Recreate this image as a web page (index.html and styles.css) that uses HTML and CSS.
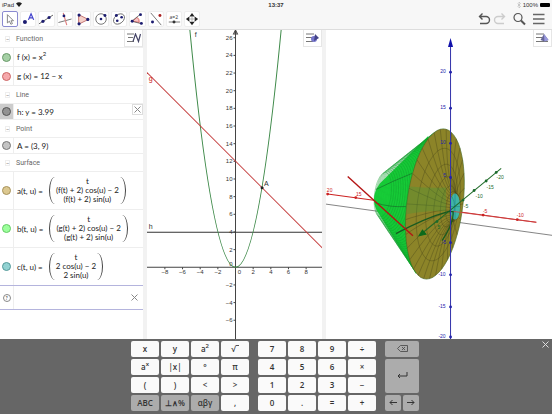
FILE: index.html
```
<!DOCTYPE html>
<html lang="en">
<head>
    <meta charset="UTF-8">
    <meta name="viewport" content="width=device-width, initial-scale=1.0">
    <title>Graphing Calculator</title>
    <link rel="stylesheet" href="styles.css">
</head>
<body>
    <header class="header">
        <div class="status-bar">
            <div class="status-left">
                <span>iPad</span>
                <svg width="6" height="5" viewBox="0 0 12 10"><path d="M0 3Q6-2 12 3L6 10Z" fill="#222"/></svg>
            </div>
            <strong class="clock">13:37</strong>
            <div class="status-right">
                <svg width="4" height="6" viewBox="0 0 8 12" fill="none" stroke="#aaa"><path d="M1 3l6 6-3 3V0l3 3-6 6"/></svg>
                <span>100%</span>
                <span class="battery"></span>
            </div>
        </div>
        <div class="toolbar">
            <div class="tools">
                <button class="tool selected" aria-label="Move"><svg viewBox="0 0 16 16"><path d="M5 3v9.500l2.300-2 1.700 3.500 1.800-.8-1.700-3.200h2.900z" fill="#fff" stroke="#777"/></svg></button>
                <button class="tool" aria-label="Point"><svg viewBox="0 0 16 16"><circle cx="4.500" cy="11.500" r="2.300" fill="#1c1c70"/><path d="M8.500 9l3-7 3 7M9.500 6.800h4" fill="none" stroke="#44c" stroke-width="1.400"/></svg></button>
                <button class="tool" aria-label="Line"><svg viewBox="0 0 16 16"><path d="M0 13.500L16 3.500" stroke="#555"/><circle cx="4.500" cy="10.700" r="1.800" fill="#1c1c70"/><circle cx="11.500" cy="6.300" r="1.800" fill="#1c1c70"/></svg></button>
                <button class="tool" aria-label="Perpendicular line"><svg viewBox="0 0 16 16"><path d="M.5 12l15-4" stroke="#666"/><path d="M6 1l4 14" stroke="#e08080" stroke-width="1.300"/><circle cx="6.800" cy="4.500" r="1.600" fill="#1c1c70"/></svg></button>
                <button class="tool" aria-label="Polygon"><svg viewBox="0 0 16 16"><path d="M3 3l11 5.500L3 14z" fill="#f5d0c8" stroke="#b66"/><circle cx="3.500" cy="3.500" r="1.800" fill="#1c1c70"/><circle cx="13.500" cy="8.500" r="1.800" fill="#1c1c70"/><circle cx="3.500" cy="13.500" r="1.800" fill="#1c1c70"/></svg></button>
                <button class="tool" aria-label="Circle"><svg viewBox="0 0 16 16"><circle cx="8" cy="8" r="6" fill="none" stroke="#666"/><circle cx="8" cy="8" r="1.500" fill="#1c1c70"/><circle cx="12.500" cy="4" r="1.700" fill="#1c1c70"/></svg></button>
                <button class="tool" aria-label="Ellipse"><svg viewBox="0 0 16 16"><ellipse cx="8" cy="8" rx="7" ry="5" transform="rotate(-40 8 8)" fill="none" stroke="#666"/><circle cx="5" cy="4" r="1.700" fill="#1c1c70"/><circle cx="6" cy="10" r="1.500" fill="#1c1c70"/><circle cx="11" cy="6" r="1.500" fill="#1c1c70"/></svg></button>
                <button class="tool" aria-label="Angle"><svg viewBox="0 0 16 16"><path d="M3 10.500L8 6q3 2 2.500 6z" fill="#f7c5c5" stroke="#d55"/><path d="M12 2.500L2 10.500l11.500 3" fill="none" stroke="#666"/><circle cx="12" cy="3" r="1.700" fill="#1c1c70"/><circle cx="2.500" cy="10.500" r="1.700" fill="#1c1c70"/><circle cx="13" cy="13" r="1.700" fill="#1c1c70"/></svg></button>
                <button class="tool" aria-label="Reflect"><svg viewBox="0 0 16 16"><path d="M2 1l12 14" stroke="#666"/><circle cx="4" cy="11.500" r="1.700" fill="#1c1c70"/><circle cx="12.500" cy="4" r="1.700" fill="#a22"/></svg></button>
                <button class="tool" aria-label="Slider"><span class="slider-label">a=2</span><svg class="slider-icon" viewBox="0 0 16 4"><path d="M2 2h13" stroke="#666"/><circle cx="8" cy="2" r="1.700" fill="#333"/></svg></button>
                <button class="tool" aria-label="Move view"><svg viewBox="0 0 16 16"><path d="M8 1l3 4H5zM8 15l3-4H5zM1 8l4-3v6zM15 8l-4-3v6z" fill="#222"/><path d="M8 5v6M5 8h6" stroke="#aaa"/></svg></button>
            </div>
            <div class="actions">
                <button aria-label="Undo"><svg width="13" height="14" viewBox="0 0 13 14"><path d="M4.500 1.500L1.500 4.500l3 3M1.500 4.500H8a3.500 3.500 0 0 1 0 7H2" fill="none" stroke="#555" stroke-width="1.400"/></svg></button>
                <button aria-label="Redo"><svg width="13" height="14" viewBox="0 0 13 14"><path d="M8.500 1.500l3 3-3 3M11.500 4.500H5a3.500 3.500 0 0 0 0 7h6" fill="none" stroke="#ccc" stroke-width="1.400"/></svg></button>
                <button class="search" aria-label="Search"><svg width="13" height="14" viewBox="0 0 13 14"><circle cx="5" cy="5.500" r="4" fill="none" stroke="#555" stroke-width="1.200"/><path d="M8 8.500l4 4" stroke="#555" stroke-width="2"/></svg></button>
                <button class="menu" aria-label="Menu"><svg width="12" height="12" viewBox="0 0 12 12"><path d="M0 1.500h11.500M0 6h11.500M0 10.500h11.500" stroke="#666" stroke-width="1.300"/></svg></button>
            </div>
        </div>
    </header>

    <main class="views">
        <section class="algebra">
            <button class="style-button" aria-label="Style"><svg width="14" height="10" viewBox="0 0 14 10"><path d="M0 1h7M1 4.500h5M0 8.500h7" stroke="#777"/><path d="M6 8.500L8.500 1l3 7.500L13.500 1" fill="none" stroke="#446" stroke-width="1.200"/></svg></button>
            <h2 class="group"><span class="collapse">–</span>Function</h2>
            <div class="row tall">
                <span class="marker"><i class="dot green"></i></span>
                <span class="formula">f (x) = x<sup>2</sup></span>
            </div>
            <div class="row tall">
                <span class="marker"><i class="dot red"></i></span>
                <span class="formula">g (x) = 12 − x</span>
            </div>
            <h2 class="group"><span class="collapse">–</span>Line</h2>
            <div class="row chosen">
                <span class="marker"><i class="dot dark"></i></span>
                <span class="formula">h: y = 3.99</span>
                <button class="remove boxed" aria-label="Delete h"><svg width="7" height="7" viewBox="0 0 7 7"><path d="M.5.5l6 6M6.500.5l-6 6" stroke="#888"/></svg></button>
            </div>
            <h2 class="group"><span class="collapse">–</span>Point</h2>
            <div class="row">
                <span class="marker"><i class="dot gray"></i></span>
                <span class="formula">A = (3, 9)</span>
            </div>
            <h2 class="group"><span class="collapse">–</span>Surface</h2>
            <div class="row surface">
                <span class="marker"><i class="dot tan"></i></span>
                <span class="formula">a(t, u) =</span>
                <span class="vector"><span>t</span><span>(f(t) + 2) cos(u) − 2</span><span>(f(t) + 2) sin(u)</span></span>
            </div>
            <div class="row surface">
                <span class="marker"><i class="dot lime"></i></span>
                <span class="formula">b(t, u) =</span>
                <span class="vector"><span>t</span><span>(g(t) + 2) cos(u) − 2</span><span>(g(t) + 2) sin(u)</span></span>
            </div>
            <div class="row surface">
                <span class="marker"><i class="dot teal"></i></span>
                <span class="formula">c(t, u) =</span>
                <span class="vector"><span>t</span><span>2 cos(u) − 2</span><span>2 sin(u)</span></span>
            </div>
            <div class="row entry">
                <span class="marker"><i class="help">?</i></span>
                <input type="text" aria-label="Input">
                <button class="remove" aria-label="Clear input"><svg width="7" height="7" viewBox="0 0 7 7"><path d="M.5.5l6 6M6.500.5l-6 6" stroke="#888"/></svg></button>
            </div>
        </section>

        <section class="graphics">
            <button class="style-button" aria-label="Style"><svg width="14" height="10" viewBox="0 0 14 10"><path d="M0 1h8M0 4.500h6M0 8.500h7" stroke="#777"/><circle cx="8" cy="6" r="3" fill="#77c"/><path d="M9 1l4 4-5 3z" fill="#448"/></svg></button>
            <svg class="plot" viewBox="0 0 175 308" preserveAspectRatio="xMidYMin slice">
                <g id="axes" class="axes">
                    <path d="M0 236.500H175M88.500 1V308"/>
                    <path d="M86.500 4l2-4 2 4z" fill="#333"/>
                </g>
                <path d="M0 201.500H175" stroke="#333" fill="none"/>
                <path d="M43 0Q88.500 473 134 0" stroke="#3f8a4a" fill="none"/>
                <path d="M0 42.200l175 175" stroke="#c43a3a" fill="none"/>
                <circle cx="115" cy="157.300" r="1.500" fill="#222"/>
                <text x="48" y="7">f</text>
                <text x="2" y="51" class="red-label">g</text>
                <text x="2" y="198">h</text>
                <text x="117" y="155">A</text>
            </svg>
        </section>

        <section class="graphics3d">
            <button class="style-button" aria-label="Style"><svg width="14" height="10" viewBox="0 0 14 10"><path d="M0 1h8M0 4.500h6M0 8.500h12" stroke="#777"/><path d="M8 1l4.500 6-4 1.500L4.500 7z" fill="#669"/><path d="M8 1l4.500 6-4 1.500z" fill="#99d"/></svg></button>
            <svg class="plot" viewBox="0 0 226 308" preserveAspectRatio="xMidYMin slice">
                <path d="M0 173.500L226 204.700" stroke="#666" stroke-width=".8"/>
                <path d="M2 163.500L210 191.700" stroke="#c22"/>
                <path d="M102 106L54 153Q44 167 51 180L90 243L120 200z" fill="#1be43e"/>
                <g id="cone" fill="none" stroke="#0f9a2a" stroke-width=".4"></g>
                <path d="M50 159Q68 150 86 143M49 172q15 5 31 4" fill="none" stroke="#17702a" stroke-width=".7"/>
                <g id="bowl" fill="none" stroke="#4a461a" stroke-width=".4"></g>
                <path d="M84 156q20 2 36 1v24q-18-2-40 3q0-14 4-28z" fill="#3a9a3a" opacity=".3"/>
                <ellipse cx="129" cy="176" rx="5" ry="13" fill="#3fb5a5"/>
                <path d="M129 163v26M124 176h10M126 166q5 10 0 20" fill="none" stroke="#187a80" stroke-width=".5"/>
                <path d="M124.500 180.500L210 191.700" stroke="#c44" stroke-width=".8"/>
                <path d="M175 138L97 202" stroke="#1d6a26"/>
                <path d="M93 205l3.500-5.500 3.500 4z" fill="#0b6a1b" stroke="#0b6a1b"/>
                <path d="M70 203q30-16 52-22h5q1 11-11 29" fill="none" stroke="#175a20" stroke-width="1.300"/>
                <path d="M22 146l65 59" stroke="#b41414" stroke-width="1.400"/>
                <path d="M124.500 14V308" stroke="#33a"/>
                <path d="M122 17l2.500-9 2.500 9z" fill="#11a"/>
                <g id="marks"></g>
            </svg>
        </section>
    </main>

    <footer class="keyboard">
        <button class="close" aria-label="Close keyboard"><svg width="7" height="7" viewBox="0 0 7 7"><path d="M.5.5l6 6M6.500.5l-6 6" stroke="#ddd"/></svg></button>
        <div class="keys">
            <button>x</button><button>y</button><button>a<sup>2</sup></button><button>√<span class="root"></span></button>
            <button>a<sup>x</sup></button><button>|x|</button><button>°</button><button>π</button>
            <button>(</button><button>)</button><button>&lt;</button><button>&gt;</button>
            <button class="gray">ABC</button><button class="gray">⊥∧%</button><button class="gray">αβγ</button><button>,</button>
        </div>
        <div class="keys">
            <button>7</button><button>8</button><button>9</button><button>÷</button>
            <button>4</button><button>5</button><button>6</button><button>×</button>
            <button>1</button><button>2</button><button>3</button><button>−</button>
            <button>0</button><button>.</button><button>=</button><button>+</button>
        </div>
        <div class="keys control">
            <button class="gray wide" aria-label="Backspace"><svg width="11" height="7" viewBox="0 0 11 7"><path d="M3.500.5h7v6h-7l-3-3zM5 2l3 3M8 2L5 5" fill="none" stroke="#444" stroke-width=".8"/></svg></button>
            <button class="gray wide enter" aria-label="Enter"><svg width="11" height="7" viewBox="0 0 11 7"><path d="M10 0v4H1M3 2L1 4l2 2" fill="none" stroke="#333"/></svg></button>
            <button class="gray" aria-label="Left"><svg width="8" height="7" viewBox="0 0 8 7"><path d="M8 3.500H1M3.500 1L1 3.500 3.500 6" fill="none" stroke="#333"/></svg></button>
            <button class="gray" aria-label="Right"><svg width="8" height="7" viewBox="0 0 8 7"><path d="M0 3.500h7M4.500 1L7 3.500 4.500 6" fill="none" stroke="#333"/></svg></button>
        </div>
    </footer>
    <script src="script.js"></script>
</body>
</html>
```
FILE: styles.css
```
* {
    box-sizing: border-box;
}

body {
    margin: 0;
    display: flex;
    flex-direction: column;
    min-height: 100vh;
    font-family: "Open Sans", sans-serif;
    font-size: 7px;
    color: #333;
    background-color: #fff;
}

button {
    display: flex;
    align-items: center;
    justify-content: center;
    margin: 0;
    padding: 0;
    border: none;
    background: none;
    font: inherit;
    color: inherit;
    cursor: pointer;
}

/* Header */
.header {
    background-color: #f7f7f7;
    border-bottom: 1px solid #ddd;
}

.status-bar {
    display: grid;
    grid-template-columns: 1fr auto 1fr;
    align-items: center;
    height: 9px;
    padding: 0 2px;
    font-family: "Liberation Sans", sans-serif;
    font-size: 6px;
}

.status-left, .status-right {
    display: flex;
    align-items: center;
    gap: 2px;
}

.status-right {
    justify-content: flex-end;
}

.battery {
    width: 10px;
    height: 4px;
    border-radius: 1px;
    background-color: #000;
}

.toolbar {
    display: flex;
    justify-content: space-between;
    align-items: center;
    padding: 2px 7px 2px 2px;
}

.tools {
    display: flex;
    gap: 2px;
    width: 198px;
}

.tool {
    flex: 1;
    flex-direction: column;
    height: 16px;
    background-color: #fff;
    border: 1px solid #eee;
    border-radius: 2px;
}

.tool.selected {
    border-color: #8a8ad0;
}

.tool svg {
    width: 14px;
    height: 14px;
}

.tool .slider-icon {
    height: 4px;
}

.slider-label {
    font-size: 5px;
    line-height: 5px;
}

.actions {
    display: flex;
    align-items: center;
    gap: 2px;
}

.actions .search, .actions .menu {
    margin-left: 5px;
}

/* Views */
.views {
    flex: 1;
    display: grid;
    grid-template-columns: 143fr 175fr 226fr;
    gap: 4px;
    background-color: #f2f2f2;
}

.algebra, .graphics, .graphics3d {
    position: relative;
    background-color: #fff;
    min-width: 0;
}

.style-button {
    position: absolute;
    top: 0;
    right: 0;
    z-index: 1;
    width: 19px;
    height: 17px;
    background-color: #fff;
    border: 1px solid #e6e6e6;
    border-top: none;
}

/* Algebra list */
.group {
    display: flex;
    align-items: center;
    gap: 6px;
    height: 18px;
    margin: 0;
    padding-left: 5px;
    border-bottom: 1px solid #eee;
    font-family: Roboto, sans-serif;
    font-size: 7px;
    font-weight: 400;
    color: #666;
}

.collapse {
    width: 5px;
    height: 6px;
    border: 1px solid #eee;
    line-height: 4px;
    text-align: center;
    font-size: 5px;
}

.row {
    display: flex;
    align-items: center;
    height: 16px;
    padding-right: 3px;
    border-bottom: 1px solid #eee;
    font-family: Lato, sans-serif;
    font-size: 8px;
    color: #222;
}

.row.tall {
    height: 19px;
}

.row.surface {
    height: 38px;
}

.marker {
    display: flex;
    align-items: center;
    justify-content: center;
    align-self: stretch;
    width: 14px;
    margin-right: 3px;
    border-right: 1px solid #eee;
}

.chosen .marker {
    background-color: #ccc;
}

.dot {
    width: 9px;
    height: 9px;
    border: 1px solid #777;
    border-radius: 50%;
}

.dot.green { background-color: #a5d0a5; border-color: #6a9a6a; }
.dot.red { background-color: #f5a8ab; border-color: #c66; }
.dot.dark { background-color: #929292; border-color: #555; }
.dot.gray { background-color: #c4c4c4; }
.dot.tan { background-color: #dcc890; border-color: #a8935c; }
.dot.lime { background-color: #9cff9c; border-color: #6c6; }
.dot.teal { background-color: #92d2d2; border-color: #599; }

.formula {
    flex: none;
}

.formula sup {
    font-size: 6px;
    line-height: 0;
}

.vector {
    position: relative;
    display: flex;
    flex-direction: column;
    align-items: center;
    margin-left: 6px;
    padding: 0 7px;
    line-height: 9px;
    white-space: nowrap;
}

/* tall brackets round the column */
.vector::before, .vector::after {
    content: "";
    position: absolute;
    top: 0;
    bottom: 0;
    width: 5px;
}

.vector::before {
    left: 0;
    border-left: 1px solid #444;
    border-radius: 100% 0 0 100% / 50%;
}

.vector::after {
    right: 0;
    border-right: 1px solid #444;
    border-radius: 0 100% 100% 0 / 50%;
}

.remove {
    width: 11px;
    height: 11px;
    margin-left: auto;
}

.remove.boxed {
    align-self: flex-start;
    margin-right: -3px;
    border: 1px solid #ddd;
}

.row.entry {
    height: 25px;
    margin-top: -1px;
    border-top: 1px solid #b4b4dd;
    border-bottom: 1px solid #b4b4dd;
}

.entry input {
    flex: 1;
    min-width: 0;
    border: none;
    outline: none;
    background: none;
    font: inherit;
}

.help {
    width: 8px;
    height: 8px;
    border: 1px solid #888;
    border-radius: 50%;
    font-size: 5px;
    line-height: 6px;
    text-align: center;
    font-style: normal;
}

/* Plots */
.plot {
    display: block;
    width: 100%;
    height: 100%;
    font-family: "Liberation Sans", sans-serif;
    font-size: 7px;
    fill: #333;
}

.axes path {
    fill: none;
    stroke: #444;
    stroke-width: 1px;
}

.axes text {
    font-size: 6px;
}

.x-label {
    text-anchor: middle;
}

.y-label {
    text-anchor: end;
}

.plot .red-label {
    fill: #c22;
}

#marks text {
    font-size: 5px;
    text-anchor: middle;
}

/* Keyboard */
.keyboard {
    position: relative;
    display: flex;
    justify-content: center;
    gap: 9px;
    padding: 2px 2px 3px 0;
    background-color: #666;
}

.keys {
    display: grid;
    grid-template-columns: repeat(4, 28px);
    grid-auto-rows: 16px;
    gap: 2px;
}

.keys.control {
    grid-template-columns: repeat(2, 16px);
}

.keys button {
    display: block;
    background-color: #fafafa;
    border-radius: 2px;
    font-size: 8px;
    line-height: 16px;
    font-weight: 600;
    color: #333;
}

.keys .gray {
    background-color: #acacac;
}

.keys .wide {
    grid-column: span 2;
}

.keys .enter {
    grid-row: span 2;
}

.keys sup {
    font-size: 6px;
    line-height: 0;
}

.root {
    display: inline-block;
    width: 3px;
    height: 7px;
    border-top: 1px solid #555;
}

.close {
    position: absolute;
    top: 2px;
    right: 3px;
    width: 7px;
    height: 7px;
}
```
FILE: script.js
```
const SVG = 'http://www.w3.org/2000/svg';

function add(parent, name, attrs, text) {
    const el = document.createElementNS(SVG, name);
    for (const key in attrs) el.setAttribute(key, attrs[key]);
    if (text !== undefined) el.textContent = text;
    parent.appendChild(el);
    return el;
}

// 2D axes, one unit is 8.8 in both directions
const axes = document.getElementById('axes');
const unit = 8.8;
const originX = 88.5;
const originY = 236.5;

for (let n = -8; n <= 8; n += 2) {
    const x = originX + n * unit;
    if (n !== 0) add(axes, 'path', { d: `M${x} ${originY}v2` });
    add(axes, 'text', { x: n === 0 ? x + 4 : x, y: originY + 7, class: 'x-label' }, n < 0 ? '−' + -n : n);
}

for (let n = -6; n <= 26; n += 2) {
    const y = originY - n * unit;
    if (n !== 0) add(axes, 'path', { d: `M${originX} ${y}h-2` });
    add(axes, 'text', { x: originX - 3, y: n === 0 ? y - 1 : y + 2, class: 'y-label' }, n < 0 ? '−' + -n : n);
}

// Circle of radius r round the x axis at depth t, seen from the side
function project(t, r, u) {
    const s = r * Math.sin(u);
    return [129 - 6.7 * t + 2.55 * r * Math.cos(u) + 0.76 * s, 177 - 1.2 * t - 6.8 * s];
}

function curve(points) {
    return 'M' + points.map(p => p[0].toFixed(1) + ' ' + p[1].toFixed(1)).join('L');
}

function ring(t, r) {
    const points = [];
    for (let i = 0; i <= 60; i++) points.push(project(t, r, i * Math.PI / 30));
    return curve(points);
}

const cone = document.getElementById('cone');
for (let t = 3; t <= 10.75; t += 0.25) {
    add(cone, 'path', { d: ring(t, 14 - t) });
}

const bowl = document.getElementById('bowl');
add(bowl, 'path', { d: ring(3, 11), fill: '#8c8428' });
for (let t = 0; t < 3; t += 0.5) {
    add(bowl, 'path', { d: ring(t, t * t + 2) });
}
for (let i = 0; i < 30; i++) {
    const points = [];
    for (let t = 0; t <= 3; t += 0.25) points.push(project(t, t * t + 2, i * Math.PI / 15));
    add(bowl, 'path', { d: curve(points) });
}

// Axis marks in space: colour, dot x, dot y, label, label x, label y
const marks = [
    ['#22a', 124.5, 42, '20', 117, 43], ['#22a', 124.5, 78, '15', 117, 79],
    ['#22a', 124.5, 113, '10', 117, 114], ['#22a', 124.5, 147, '5', 119, 147],
    ['#22a', 124.5, 212, '-5', 118, 213], ['#22a', 124.5, 244, '-10', 116, 245],
    ['#22a', 124.5, 276, '-15', 116, 277], ['#22a', 124.5, 306, '-20', 116, 307],
    ['#c22', 2, 163.5, '20', 4, 161], ['#c22', 30, 167, '15', 33, 165],
    ['#c22', 157, 184.5, '-5', 159, 182], ['#c22', 191, 189, '-10', 194, 186],
    ['#1a6a2a', 170, 142, '-20', 174, 149], ['#1a6a2a', 160, 150.5, '-15', 164, 158],
    ['#1a6a2a', 148, 160, '-10', 153, 167], ['#1a6a2a', 137, 169.5, '-5', 140, 177],
    ['#1a6a2a', 111, 191, '5', 113, 198]
];
const group = document.getElementById('marks');
for (const [color, x, y, label, labelX, labelY] of marks) {
    add(group, 'circle', { cx: x, cy: y, r: 1.4, fill: color });
    add(group, 'text', { x: labelX, y: labelY, fill: color }, label);
}
```
